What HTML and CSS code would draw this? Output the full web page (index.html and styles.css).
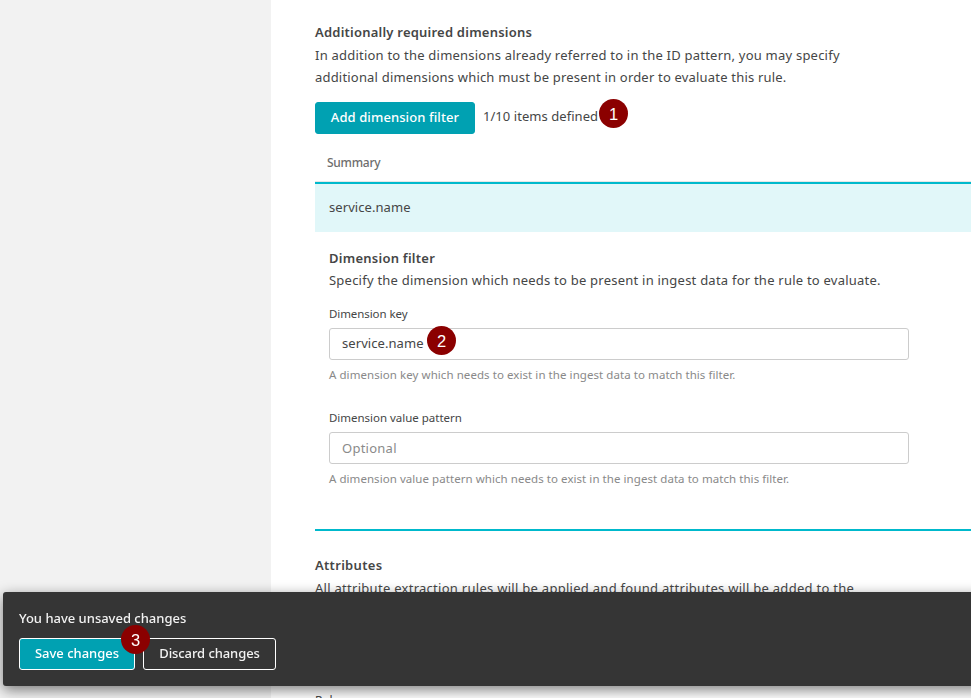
FILE: index.html
```html
<!DOCTYPE html>
<html lang="en">
<head>
<meta charset="utf-8">
<title>Additionally required dimensions</title>
<link rel="stylesheet" href="styles.css">
</head>
<body>
<div class="page">
  <aside class="sidebar"></aside>
  <main class="content">
    <section class="intro">
      <h2 class="heading"><span class="t-h1">Additionally required dimensions</span></h2>
      <p class="text"><span class="t-p1">In addition to the dimensions already referred to in the ID pattern, you may specify</span><br><span class="t-p2">additional dimensions which must be present in order to evaluate this rule.</span></p>
    </section>
    <div class="toolbar">
      <button class="btn btn-add"><span class="t-add">Add dimension filter</span></button>
      <span class="count"><span class="t-count">1/10 items defined</span><span class="badge badge-1">1</span></span>
    </div>
    <div class="table-head"><span class="t-sum">Summary</span></div>
    <div class="table-row"><span class="t-row">service.name</span></div>
    <section class="details">
      <h2 class="heading"><span class="t-h2">Dimension filter</span></h2>
      <p class="text"><span class="t-p3">Specify the dimension which needs to be present in ingest data for the rule to evaluate.</span></p>
      <div class="field">
        <label class="label"><span class="t-l1">Dimension key</span></label>
        <div class="input"><span class="t-row">service.name</span><span class="badge badge-2">2</span></div>
        <p class="hint"><span class="t-n1">A dimension key which needs to exist in the ingest data to match this filter.</span></p>
      </div>
      <div class="field">
        <label class="label"><span class="t-l2">Dimension value pattern</span></label>
        <div class="input placeholder"><span class="t-opt">Optional</span></div>
        <p class="hint"><span class="t-n2">A dimension value pattern which needs to exist in the ingest data to match this filter.</span></p>
      </div>
    </section>
    <section class="attributes">
      <h2 class="heading"><span class="t-h3">Attributes</span></h2>
      <p class="text"><span class="t-p4">All attribute extraction rules will be applied and found attributes will be added to the</span></p>
      <p class="rules">Rules</p>
    </section>
  </main>
</div>
<div class="savebar">
  <p class="save-title"><span class="t-save">You have unsaved changes</span></p>
  <div class="actions">
    <button class="btn btn-save"><span class="t-b1">Save changes</span><span class="badge badge-3">3</span></button>
    <button class="btn btn-discard"><span class="t-b2">Discard changes</span></button>
  </div>
</div>
</body>
</html>
```
FILE: styles.css
```css
* { box-sizing: border-box; }
html, body { margin: 0; height: 100%; overflow: hidden; }
body { font-family: "Noto Sans", sans-serif; font-size: 13px; color: #454646; background: #fff; }
h2, p { margin: 0; }
span { white-space: nowrap; }
.page { display: flex; height: 698px; overflow: hidden; }
.sidebar { width: 271px; flex: none; background: #f2f2f2; }
.content { flex: 1; padding: 21px 0 0 44px; min-width: 0; }
.heading { font-size: 13px; font-weight: 600; line-height: 22px; height: 23px; }
.text { line-height: 22px; }
.toolbar { display: flex; margin-top: 14px; height: 32px; gap: 8px; }
.btn { position: relative; display: flex; align-items: center; justify-content: center; height: 32px; padding: 0 0 2px; border: 1px solid #fff; border-radius: 3px; background: #00a1b2; color: #fff; font: 500 13px "Noto Sans", sans-serif; }
.btn-add { width: 160px; border-color: #00a1b2; }
.count { position: relative; line-height: 29px; }
.badge { position: absolute; width: 29px; height: 29px; border-radius: 50%; background: #8b0000; color: #fff; font: 16.5px/30px "Liberation Sans", sans-serif; text-align: center; letter-spacing: 0; z-index: 2; }
.badge-1 { left: 116px; top: -3px; }
.badge-2 { left: 97px; top: -3px; }
.badge-3 { left: 101px; top: -14px; }
.table-head { height: 50px; padding: 18px 12px 0; font-size: 12px; line-height: 22px; font-weight: 500; color: #6d6d6d; border-bottom: 2px solid #00b9cc; box-shadow: inset 0 -1px #e6e6e6; }
.table-row { height: 48px; padding-left: 14px; line-height: 47px; background: #e1f7f9; }
.details { padding: 15px 0 0 14px; height: 299px; border-bottom: 2px solid #00b9cc; }
.details .heading { height: 22px; }
.field { height: 104px; padding-top: 14px; }
.label { display: block; height: 23px; font-size: 11.5px; line-height: 18px; }
.input { position: relative; width: 580px; height: 32px; padding-left: 12px; border: 1px solid #ccc; border-radius: 3px; line-height: 29px; }
.placeholder { color: #8a8a8a; line-height: 31px; }
.hint { margin-top: 6px; font-size: 11.5px; line-height: 18px; color: #898989; }
.attributes { padding-top: 23px; }
.rules { margin-top: 91px; font-size: 12px; line-height: 22px; letter-spacing: -.2px; }
.savebar { position: fixed; left: 3px; right: -20px; top: 592px; height: 94px; padding: 15px 16px; border-radius: 3px; background: #353535; box-shadow: 0 4px 14px rgba(0,0,0,.5); color: #f2f2f2; }
.save-title { font-weight: 500; line-height: 22px; }
.actions { display: flex; gap: 8px; margin-top: 9px; }
.btn-save { width: 116px; }
.btn-discard { width: 133px; background: transparent; color: #f2f2f2; }

/* Tracking per text run */
.t-h1 { letter-spacing: .22px; }
.t-p1 { letter-spacing: .22px; }
.t-p2 { letter-spacing: .19px; }
.t-count { letter-spacing: .05px; }
.t-add { letter-spacing: .1px; }
.t-sum { letter-spacing: -.25px; }
.t-row { letter-spacing: .07px; }
.t-h2 { letter-spacing: .25px; }
.t-p3 { letter-spacing: .23px; }
.t-l1 { letter-spacing: -.08px; }
.t-n1 { letter-spacing: .065px; }
.t-l2 { letter-spacing: -.02px; }
.t-opt { letter-spacing: .25px; }
.t-n2 { letter-spacing: .057px; }
.t-h3 { letter-spacing: .3px; }
.t-p4 { letter-spacing: .28px; }
.t-save { letter-spacing: -.01px; }
.t-b2 { letter-spacing: -.08px; }
```
